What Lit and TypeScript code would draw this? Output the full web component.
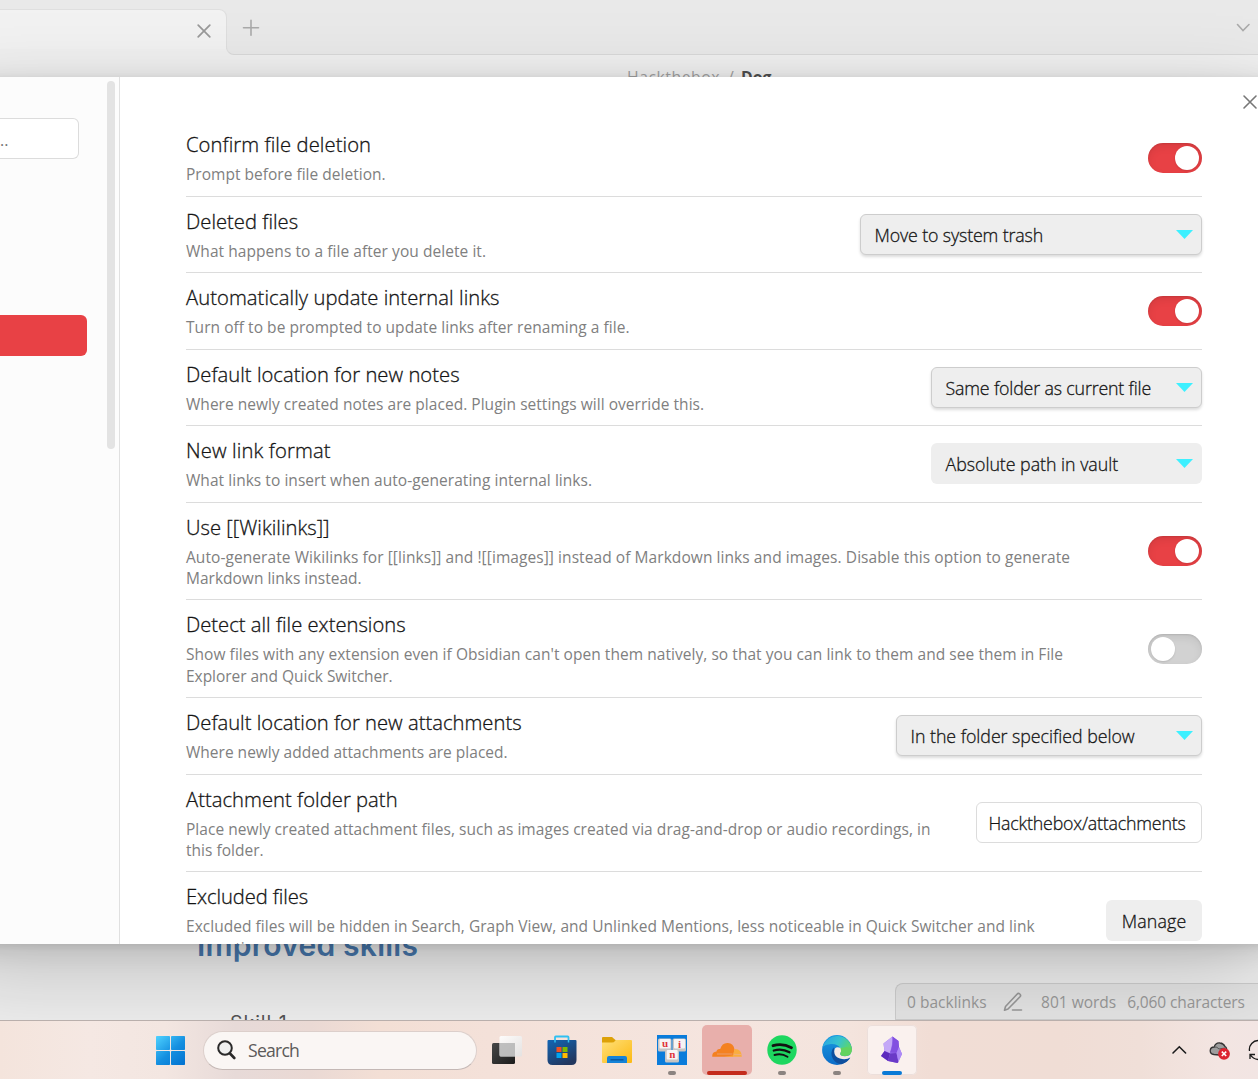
import { LitElement, html, css, svg, nothing } from "lit";
import { customElement, property } from "lit/decorators.js";

/** One line of text whose tracking is adjusted to fill a given width. */
@customElement("fit-text")
class FitText extends LitElement {
  @property({ type: Number }) w = 0;
  @property() text = "";
  static styles = css`
    :host { display: block; white-space: pre; }
    .t { display: inline-block; }
  `;
  updated() {
    const el = this.renderRoot.querySelector(".t") as HTMLElement;
    el.style.letterSpacing = "0px";
    const natural = el.getBoundingClientRect().width;
    if (this.w && natural) {
      el.style.letterSpacing = `${(this.w - 0.4 - natural) / this.text.length}px`;
    }
  }
  render() {
    return html`<span class="t">${this.text}</span>`;
  }
}

type Line = [string, number];
interface Setting {
  title: Line;
  desc: Line[];
  kind: "toggle" | "select" | "input" | "button";
  on?: boolean;
  flat?: boolean;
  value?: Line;
  width?: number;
}

const SETTINGS: Setting[] = [
  { title: ["Confirm file deletion", 185.5], desc: [["Prompt before file deletion.", 200]], kind: "toggle", on: true },
  { title: ["Deleted files", 112.5], desc: [["What happens to a file after you delete it.", 300.5]], kind: "select", value: ["Move to system trash", 169], width: 342 },
  { title: ["Automatically update internal links", 314], desc: [["Turn off to be prompted to update links after renaming a file.", 444]], kind: "toggle", on: true },
  { title: ["Default location for new notes", 274], desc: [["Where newly created notes are placed. Plugin settings will override this.", 518.5]], kind: "select", value: ["Same folder as current file", 206], width: 271 },
  { title: ["New link format", 145], desc: [["What links to insert when auto-generating internal links.", 406.5]], kind: "select", flat: true, value: ["Absolute path in vault", 173], width: 271 },
  { title: ["Use [[Wikilinks]]", 144], desc: [["Auto-generate Wikilinks for [[links]] and ![[images]] instead of Markdown links and images. Disable this option to generate", 884.5], ["Markdown links instead.", 176]], kind: "toggle", on: true },
  { title: ["Detect all file extensions", 220], desc: [["Show files with any extension even if Obsidian can't open them natively, so that you can link to them and see them in File", 877.5], ["Explorer and Quick Switcher.", 207]], kind: "toggle", on: false },
  { title: ["Default location for new attachments", 336], desc: [["Where newly added attachments are placed.", 322]], kind: "select", value: ["In the folder specified below", 224.5], width: 306 },
  { title: ["Attachment folder path", 212], desc: [["Place newly created attachment files, such as images created via drag-and-drop or audio recordings, in", 745], ["this folder.", 78]], kind: "input", value: ["Hackthebox/attachments", 197.5], width: 226 },
  { title: ["Excluded files", 122.5], desc: [["Excluded files will be hidden in Search, Graph View, and Unlinked Mentions, less noticeable in Quick Switcher and link", 849], ["suggestions.", 89]], kind: "button", value: ["Manage", 65], width: 96 },
];

@customElement("setting-row")
class SettingRow extends LitElement {
  @property({ attribute: false }) data!: Setting;
  static styles = css`
    :host { display: block; }
    .row { box-sizing: border-box; display: flex; align-items: center; justify-content: space-between; border-top: 1px solid #dcdcdc; padding: 11px 0 10.150px; }
    :host(:first-child) .row { border-top-color: transparent; }
    .info { display: flex; flex-direction: column; gap: 6px; }
    .title { font-size: 20.200px; line-height: 27px; color: #141414; font-weight: 300; -webkit-text-stroke: .3px #141414; }
    .desc { font-size: 15.500px; line-height: 21.300px; color: #808080; }
    .toggle { box-sizing: border-box; width: 54px; height: 30px; margin-bottom: 1px; border-radius: 15px; padding: 3px; display: flex; background: #e84145; justify-content: flex-end; box-shadow: inset 0 4px 9px rgba(0,0,0,.07), inset 0 1px 2px rgba(0,0,0,.1); }
    .toggle.off { background: #d2d2d2; justify-content: flex-start; }
    .thumb { width: 24px; height: 24px; border-radius: 50%; background: #fff; box-shadow: 0 1px 2px rgba(0,0,0,.12); }
    .box { box-sizing: border-box; height: 41px; margin-bottom: 1px; border-radius: 6px; display: flex; align-items: center; justify-content: space-between; font-size: 17.800px; line-height: 25px; color: #141414; font-weight: 300; -webkit-text-stroke: .28px #141414; background: #eee; }
    .select { padding: 2px 8px 0 13.500px; border: 1px solid #cdcdcd; box-shadow: 0 2px 3px rgba(0,0,0,.14); }
    .select.flat { border-color: transparent; background-clip: border-box; box-shadow: none; }
    .input { background: #fff; border: 1px solid #dcdcdc; padding: 2px 0 0 11.500px; }
    .button { justify-content: center; padding-top: 2px; }
    .caret { display: block; margin-top: -2px; }
  `;
  control() {
    const d = this.data;
    if (d.kind === "toggle") return html`<div class="toggle ${d.on ? "" : "off"}"><div class="thumb"></div></div>`;
    return html`<div class="box ${d.kind} ${d.flat ? "flat" : ""}" style="width:${d.width}px">
      <fit-text .text=${d.value![0]} .w=${d.value![1]}></fit-text>
      ${d.kind === "select" ? html`<svg class="caret" width="17" height="9" viewBox="0 0 17 9"><path d="M0 0H17L8.5 9Z" fill="#3df0ff"/></svg>` : nothing}
    </div>`;
  }
  render() {
    const d = this.data;
    return html`<div class="row">
      <div class="info">
        <fit-text class="title" .text=${d.title[0]} .w=${d.title[1]}></fit-text>
        <div class="desc">${d.desc.map((l) => html`<fit-text .text=${l[0]} .w=${l[1]}></fit-text>`)}</div>
      </div>
      ${this.control()}
    </div>`;
  }
}

const taskView = svg`<defs><linearGradient id="tv" x1="0" y1="0" x2="1" y2="1"><stop offset="0" stop-color="#474747"/><stop offset="1" stop-color="#1c1c1c"/></linearGradient><linearGradient id="tw" x1="0" y1="0" x2="1" y2="1"><stop offset="0" stop-color="#fff"/><stop offset="1" stop-color="#e2e2e2"/></linearGradient></defs>
  <rect x="0" y="8" width="23" height="21" rx="1.5" fill="url(#tv)"/><rect x="7.500" y="1" width="22.500" height="20.500" rx="1.500" fill="url(#tw)" opacity=".9"/><path d="M7.500 8H23V21.500H9Q7.500 21.500 7.500 20Z" fill="#b5b5b5" opacity=".8"/>`;
const store = svg`<defs><linearGradient id="st" x1="0" y1="0" x2=".6" y2="1"><stop offset="0" stop-color="#1266b5"/><stop offset="1" stop-color="#22375f"/></linearGradient></defs>
  <path d="M8 6V2.200Q8 1.500 8.700 1.500H20.800Q21.500 1.500 21.500 2.200V6" fill="none" stroke="#2fc0f2" stroke-width="1.800"/>
  <path d="M.5 6Q.5 5 1.500 5H28.500Q29.500 5 29.500 6V25Q29.500 30 24.500 30H5.500Q.5 30 .5 25Z" fill="url(#st)"/>
  <path d="M8 5V7.500M21.500 5V7.500" stroke="#2fc0f2" stroke-width="1.500"/>
  <rect x="9.500" y="12" width="5" height="5" fill="#f25022"/><rect x="15.500" y="12" width="5" height="5" fill="#7fba00"/><rect x="9.500" y="18" width="5" height="5" fill="#00a4ef"/><rect x="15.500" y="18" width="5" height="5" fill="#ffb900"/>`;
const folder = svg`<defs><linearGradient id="fo" x1="0" y1="0" x2="1" y2="1"><stop offset="0" stop-color="#ffe07a"/><stop offset="1" stop-color="#fcb912"/></linearGradient></defs>
  <path d="M0 3Q0 2 1 2H10L14 5.500V12H0Z" fill="#dda108"/><path d="M0 7.500H10Q12 7.500 13 6L14 5H29Q30 5 30 6V27Q30 28 29 28H1Q0 28 0 27Z" fill="url(#fo)"/>
  <path d="M5 28V23Q5 21 7 21H23Q25 21 25 23V28Z" fill="#1583d8"/><path d="M8.500 24.800H21.500" stroke="#0b5398" stroke-width="1.300"/>`;
const uin = svg`<rect width="30" height="30" fill="#0a7cdb"/>
  <g fill="#c7c5c4"><rect x="1" y="3.500" width="13.500" height="13" rx="1.500"/><rect x="15.500" y="3.500" width="13.500" height="13" rx="1.500"/><rect x="8" y="15" width="14" height="12.500" rx="1.500"/></g>
  <g fill="#f7f4f4"><rect x="2.500" y="4" width="11" height="9.500" rx="1"/><rect x="17" y="4" width="11" height="9.500" rx="1"/><rect x="9.700" y="15" width="11" height="9.500" rx="1"/></g>
  <g fill="#e0343a" font-family="Liberation Serif,serif" font-weight="700" font-size="11" text-anchor="middle"><text x="8" y="12">u</text><text x="22.500" y="12.500">i</text><text x="15.200" y="23">n</text></g>`;
const cloudflare = svg`<path d="M.3 21.700Q-.2 17 4.500 16.500Q4.800 13.600 8.200 14Q10 7.700 15.800 8Q21.600 8.300 22.500 14.500L21 21.700Z" fill="#f48120"/><path d="M22.500 14Q29.800 13.800 29.800 21.700H12L21 20.500Z" fill="#faad3f"/><path d="M5 19H20.500M22 19.300L29 19.500" stroke="#e9b2a4" stroke-width=".9" opacity=".65"/>`;
const spotify = svg`<circle cx="15" cy="15" r="14.700" fill="#1ed760"/><g fill="none" stroke="#121212" stroke-linecap="round"><path d="M6 10.700Q15.500 7.800 24.500 12.700" stroke-width="2.800"/><path d="M6.800 15.500Q15 13 22.500 17.300" stroke-width="2.300"/><path d="M7.500 20Q14.500 18 20.500 21.700" stroke-width="1.900"/></g>`;
const edge = svg`<defs><linearGradient id="e1" x1="0" y1=".2" x2="1" y2=".6"><stop offset="0" stop-color="#2aa5e3"/><stop offset=".5" stop-color="#37c3cf"/><stop offset="1" stop-color="#63d957"/></linearGradient><linearGradient id="e2" x1="0" y1="0" x2="0" y2="1"><stop offset="0" stop-color="#1a9be0"/><stop offset="1" stop-color="#0b6cc8"/></linearGradient></defs>
  <circle cx="15" cy="15" r="14.900" fill="url(#e2)"/>
  <path d="M.6 12A15 15 0 0 1 30 14.500Q30 21 23 21Q18 21 18.300 18.500Q20 15.500 18 12.500Q15 8.500 9 9Q3 9.500 .6 12Z" fill="url(#e1)"/>
  <path d="M11.500 12.500Q7.500 18 11 24Q14 29 19.500 29.200Q25.500 27.500 28.300 22.800Q23 25.500 18 23.500Q12 21 12.500 15.500Z" fill="#0e4f9e"/>
  <path d="M18.500 12.800Q12.500 10.500 12.200 16.500Q12.300 22 18 23.500Q24 25.300 28.500 22.300Q29.800 21 31 19L30 14.500Q29.800 21.200 23 21.200Q17.500 21 18.300 18.500Q20 15.500 18.500 12.800Z" fill="#f6e9e4"/>
  <path d="M18.300 18.500Q17.800 21 23 21Q29.800 20.500 29.900 14.500L25 12L18.500 13Q19.800 16 18.300 18.500Z" fill="#63d35f"/>`;
const obsidian = svg`<path d="M6.500 8.500L15.500 1.500L21.500 6L22 12L25 19L20.500 28L11 26L4 21L7.500 16Z" fill="#9a72ee"/><path d="M15.500 1.500L6.500 8.500L7.500 16L13 18Q15.500 10 15.500 1.500Z" fill="#c4a8f7"/><path d="M15.500 1.500L21.500 6L22 12L19.500 18L13 17.500Q16.500 10 15.500 1.500Z" fill="#8250e0"/><path d="M7.500 16L4 21L11 26L13 18.500Z" fill="#5c2bbd"/><path d="M13 18.500L19.500 18L21.500 27L20.500 28L11 26Z" fill="#6a3ac7"/><path d="M22 12L25 19L21.500 27L19.500 18Z" fill="#ad8af6"/>`;

const APPS = [
  { art: taskView, tile: "", mark: "" },
  { art: store, tile: "", mark: "" },
  { art: folder, tile: "", mark: "" },
  { art: uin, tile: "", mark: "dot" },
  { art: cloudflare, tile: "alert", mark: "red" },
  { art: spotify, tile: "", mark: "dot" },
  { art: edge, tile: "", mark: "dot" },
  { art: obsidian, tile: "active", mark: "blue" },
];

@customElement("task-bar")
class TaskBar extends LitElement {
  static styles = css`
    :host { display: block; }
    .bar { box-sizing: border-box; height: 59px; border-top: 1px solid #b9afac; display: flex; align-items: center; padding-left: 156px; background: linear-gradient(90deg, #f4e4dc 0, #f5e8e3 90px, #f3e6e1 165px, #e7dad8 235px, #ead9d4 310px, #f3dfd5 380px, #f4e1d9 490px, #f5e5df 720px, #f4e4dd 850px, #f1ddd5 930px, #f0ddd5 1060px, #f0dfd8 1140px, #f3e5e2 1220px, #f2e5e3 1258px); }
    .start { display: block; margin-top: 1px; }
    .search { box-sizing: border-box; width: 274px; height: 39px; margin: 0 0 0 16.500px; padding: 0 0 0 13.500px; display: flex; align-items: center; gap: 12px; border-radius: 20px; border: 1px solid #dccfcb; border-bottom-color: #c4b8b5; background: #faf6f4; font-size: 17.600px; color: #5c5a59; }
    .apps { display: flex; margin-left: 2.500px; height: 58px; }
    .slot { width: 55px; height: 58px; display: grid; grid-template-rows: 50px; align-content: start; justify-content: center; padding-top: 4px; box-sizing: border-box; }
    .tile { box-sizing: border-box; width: 50px; height: 50px; border-radius: 5px; display: flex; flex-direction: column; align-items: center; justify-content: space-between; padding-top: 10px; }
    .alert { background: #e8afab; }
    .active { background: #faf1ee; box-shadow: inset 0 0 0 1px #ecdfdb; }
    .mark { height: 4px; border-radius: 2px; }
    .dot { width: 8px; background: #8b8380; }
    .red { width: 40px; background: #c42b1c; }
    .blue { width: 20px; background: #0a7ad6; }
    .tray { display: flex; align-items: center; margin-left: 252px; width: 88px; overflow: hidden; flex: none; }
    .tray svg { display: block; flex: none; }
    .cloud { margin-left: 21.500px; margin-top: 1px; }
    .sync { margin-left: 17.500px; }
  `;
  render() {
    return html`<div class="bar">
      <svg class="start" width="30" height="30" viewBox="0 0 30 30"><defs><linearGradient id="win" gradientUnits="userSpaceOnUse" x1="0" y1="0" x2="26" y2="30"><stop offset="0" stop-color="#4fd2ff"/><stop offset=".55" stop-color="#148fe0"/><stop offset="1" stop-color="#0273d1"/></linearGradient></defs><g fill="url(#win)"><rect x="0" y="0" width="14" height="14" rx=".8"/><rect x="15" y="0" width="14" height="14" rx=".8"/><rect x="0" y="15" width="14" height="14" rx=".8"/><rect x="15" y="15" width="14" height="14" rx=".8"/></g></svg>
      <div class="search">
        <svg width="19" height="20" viewBox="0 0 19 20" fill="none" stroke="#2a2929"><circle cx="8" cy="8" r="6.800" stroke-width="2" fill="#efefef"/><path d="M13 13.500L17.300 18" stroke-width="2.600" stroke-linecap="round"/></svg>
        <fit-text .text=${"Search"} .w=${51.5}></fit-text>
      </div>
      <div class="apps">${APPS.map((a) => html`<div class="slot"><div class="tile ${a.tile}">
        <svg width="30" height="30" viewBox="0 0 30 30">${a.art}</svg>
        ${a.mark ? html`<div class="mark ${a.mark}"></div>` : nothing}</div></div>`)}</div>
      <div class="tray">
        <svg width="16" height="16" viewBox="0 0 16 16" fill="none" stroke="#1b1b1b" stroke-width="1.600"><path d="M2 11L8.300 4.800L14.600 11" stroke-linecap="round"/></svg>
        <svg class="cloud" width="22" height="20" viewBox="0 0 22 20"><path d="M5 13.500Q1 13 1.200 9.500Q1.500 6 5.200 6Q6.500 1.500 11 2Q14.500 2.300 16 5.500Q18 6.500 17.500 9L10 14Z" fill="#9d9d9d" stroke="#333" stroke-width="1.300"/><path d="M5.200 6Q8 5.500 10 8L16 7" fill="none" stroke="#555" stroke-width="1"/><circle cx="15" cy="12.800" r="5.900" fill="#dc2430"/><path d="M12.800 10.600L17.200 15M17.200 10.600L12.800 15" stroke="#fff" stroke-width="1.500"/></svg>
        <svg class="sync" width="22" height="22" viewBox="0 0 22 22" fill="none" stroke="#1b1b1b" stroke-width="1.300"><path d="M1.500 12A9 9 0 0 1 11 1.500M2 20V15.500H7M2 15.500Q5 20 10 20.500"/></svg>
      </div>
    </div>`;
  }
}

@customElement("app-root")
class AppRoot extends LitElement {
  static styles = css`
    :host { display: block; width: 1258px; height: 1079px; overflow: hidden; position: relative; font-family: "Open Sans", "Noto Sans", sans-serif; }
    .page { display: grid; grid-template-rows: 1020px 59px; }
    .app { position: relative; overflow: hidden; background: #f0f0f0; display: flex; flex-direction: column; }
    .tabs { height: 55px; display: flex; align-items: stretch; flex: none; }
    .tabwrap { background: linear-gradient(#e9e9e9 20px, #f0f0f0 20px); flex: none; }
    .tab { box-sizing: border-box; width: 227px; height: 40px; margin-top: 9px; border-top: 1px solid #dfdfdf; border-right: 1px solid #dedede; border-radius: 0 8px 0 0; background: #f2f2f2; display: flex; justify-content: flex-end; padding: 14px 15px 0 0; }
    .rest { flex: 1; display: flex; flex-direction: column; margin-left: -1px; }
    .cap { height: 18px; margin-left: 1px; background: #e9e9e9; flex: none; }
    .strip { box-sizing: border-box; flex: 1; border-bottom: 1px solid #d9d9d9; border-left: 1px solid #dedede; border-radius: 0 0 0 8px; background: #e9e9e9; display: flex; justify-content: space-between; padding: 1.400px 8px 0 15px; }
    .doc { flex: 1; display: flex; flex-direction: column; justify-content: space-between; }
    .crumb { display: flex; padding: 11px 0 0 627px; font-size: 15.800px; line-height: 22px; gap: 8px; color: #a0a0a0; }
    .crumb .cur { color: #4e4e4e; font-weight: 700; margin-left: -1px; }
    .bottom { height: 92px; display: flex; justify-content: space-between; align-items: flex-end; }
    .text { height: 92px; padding-left: 197px; overflow: hidden; }
    .h { font: 600 30px/36px Inter, sans-serif; color: #4878ad; margin-top: -1px; }
    .li { font: 400 19.500px/24px Inter, sans-serif; color: #555; padding-left: 33px; margin-top: 47.500px; }
    .status { box-sizing: border-box; width: 364px; height: 37px; border: 1px solid #cfcfcf; border-right: 0; border-radius: 8px 0 0 0; background: #e6e6e6; display: flex; align-items: center; padding: 0 0 0 11px; font-size: 15.500px; color: #9a9a9a; }
    .status .pen { margin: 0 18px 0 16.500px; display: block; flex: none; }
    .status .gap { margin-left: 11px; }
    .dialog { position: absolute; left: -60px; top: 77px; width: 1335px; height: 867px; background: #fff; box-shadow: 0 2px 7px rgba(0,0,0,.071), 0 6.300px 25px rgba(0,0,0,.112), 0 30px 90px rgba(0,0,0,.2); }
    .panel { margin-left: 60px; width: 1258px; height: 867px; display: flex; overflow: hidden; }
    .side { box-sizing: border-box; width: 120px; flex: none; background: #fcfcfc; border-right: 1px solid #e0e0e0; display: flex; justify-content: space-between; padding-right: 4px; }
    .nav { padding-top: 41px; }
    .find { box-sizing: border-box; width: 79px; height: 41px; border: 1px solid #dcdcdc; border-left: 0; border-radius: 0 6px 6px 0; background: #fff; font-size: 16px; line-height: 42px; color: #757575; }
    .sel { width: 87px; height: 41px; margin-top: 156px; border-radius: 0 6px 6px 0; background: #e84145; }
    .thumb { width: 8px; height: 368px; margin-top: 4px; border-radius: 4px; background: #e3e3e3; }
    .list { width: 1016px; margin-left: 66px; padding-top: 42.460px; flex: none; }
    .close { margin: 17.400px 0 0 40.400px; flex: none; }
  `;
  render() {
    return html`<div class="page">
      <div class="app">
        <div class="tabs">
          <div class="tabwrap"><div class="tab"><svg width="14" height="14" viewBox="0 0 14 14" stroke="#999" stroke-width="1.700" stroke-linecap="round"><path d="M1.200 1.200L12.800 12.800M12.800 1.200L1.200 12.800"/></svg></div></div>
          <div class="rest">
            <div class="cap"></div>
            <div class="strip">
              <svg width="18" height="18" viewBox="0 0 18 18" stroke="#aaa" stroke-width="1.600" stroke-linecap="round"><path d="M9 1.200V16.200M1.500 8.700H16.500"/></svg>
              <svg width="16" height="16" viewBox="0 0 16 16" fill="none" stroke="#aaa" stroke-width="1.600" stroke-linecap="round"><path d="M2.500 5.500L8 11.500L14 5.500"/></svg>
            </div>
          </div>
        </div>
        <div class="doc">
          <div class="crumb"><fit-text .text=${"Hackthebox"} .w=${93.5}></fit-text><span>/</span><fit-text class="cur" .text=${"Dog"} .w=${31}></fit-text></div>
          <div class="bottom">
            <div class="text"><fit-text class="h" .text=${"Improved skills"} .w=${221.5}></fit-text><fit-text class="li" .text=${"Skill 1"} .w=${58}></fit-text></div>
            <div class="status">
              <fit-text .text=${"0 backlinks"} .w=${80}></fit-text>
              <svg class="pen" width="20" height="20" viewBox="0 0 20 20" fill="none" stroke="#999" stroke-width="1.600" stroke-linecap="round" stroke-linejoin="round"><path d="M9.500 18H18.500M14 2.200A1.900 1.900 0 0 1 17 4.800L5 17L1.500 18.200L2.500 14.500Z"/></svg>
              <fit-text .text=${"801 words"} .w=${75.5}></fit-text>
              <fit-text class="gap" .text=${"6,060 characters"} .w=${118}></fit-text>
            </div>
          </div>
        </div>
        <div class="dialog"><div class="panel">
          <div class="side"><div class="nav"><div class="find">..</div><div class="sel"></div></div><div class="thumb"></div></div>
          <div class="list">${SETTINGS.map((s) => html`<setting-row .data=${s}></setting-row>`)}</div>
          <svg class="close" width="16" height="16" viewBox="0 0 16 16" stroke="#777" stroke-width="1.600" stroke-linecap="round"><path d="M2 2L14 14M14 2L2 14"/></svg>
        </div></div>
      </div>
      <task-bar></task-bar>
    </div>`;
  }
}
